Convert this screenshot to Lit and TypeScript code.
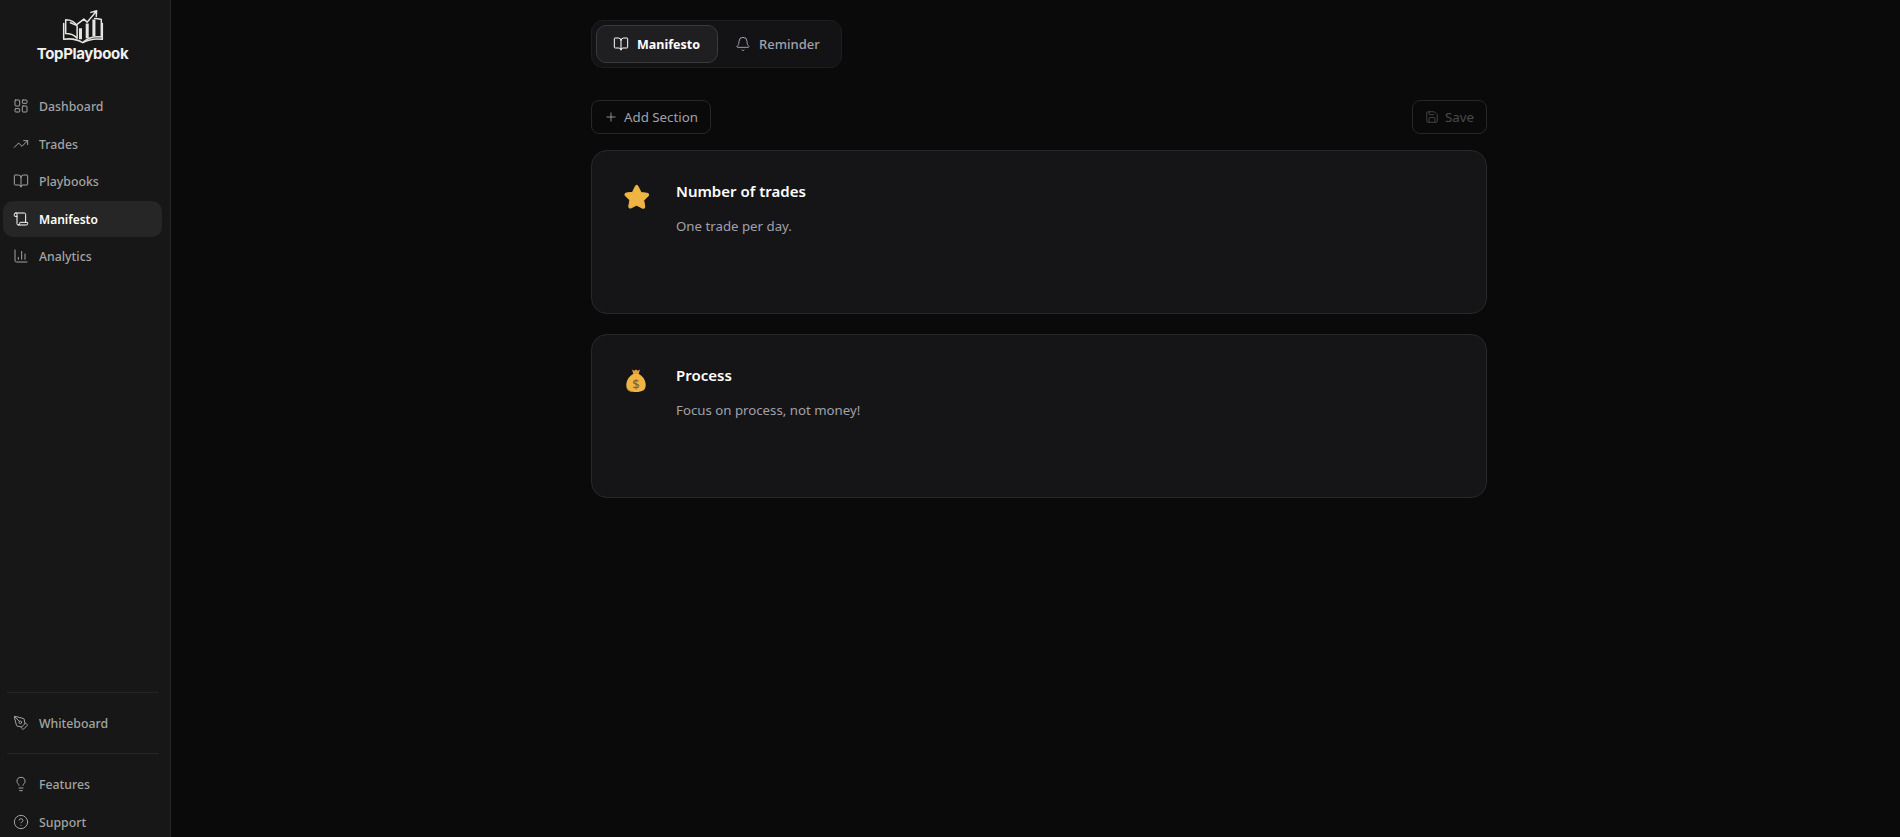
import { LitElement, html, css, svg } from "lit";
import { customElement } from "lit/decorators.js";

const ic = (body: unknown, size = 16) => html`<svg width=${size} height=${size} viewBox="0 0 24 24" fill="none" stroke="currentColor" stroke-width="1.5" stroke-linecap="round" stroke-linejoin="round">${body}</svg>`;

const icons = {
  dash: svg`<rect x="3" y="3" width="7" height="9" rx="1"/><rect x="14" y="3" width="7" height="5" rx="1"/><rect x="14" y="12" width="7" height="9" rx="1"/><rect x="3" y="16" width="7" height="5" rx="1"/>`,
  trend: svg`<path d="M16 7h6v6"/><path d="m22 7-8.5 8.5-5-5L2 17"/>`,
  book: svg`<path d="M12 7v14"/><path d="M3 18a1 1 0 0 1-1-1V4a1 1 0 0 1 1-1h5a4 4 0 0 1 4 4 4 4 0 0 1 4-4h5a1 1 0 0 1 1 1v13a1 1 0 0 1-1 1h-6a3 3 0 0 0-3 3 3 3 0 0 0-3-3z"/>`,
  scroll: svg`<path d="M19 17V5a2 2 0 0 0-2-2H4"/><path d="M8 21h12a2 2 0 0 0 2-2v-1a1 1 0 0 0-1-1H11a1 1 0 0 0-1 1v1a2 2 0 1 1-4 0V5a2 2 0 1 0-4 0v2a1 1 0 0 0 1 1h3"/>`,
  chart: svg`<path d="M3 3v16a2 2 0 0 0 2 2h16"/><path d="M8 17v-3"/><path d="M13 17V5"/><path d="M18 17V9"/>`,
  pen: svg`<path d="M15.7 21.3a1 1 0 0 1-1.4 0l-1.6-1.6a1 1 0 0 1 0-1.4l5.6-5.6a1 1 0 0 1 1.4 0l1.6 1.6a1 1 0 0 1 0 1.4z"/><path d="m18 13-1.4-6.9a1 1 0 0 0-.7-.8L3.2 2a1 1 0 0 0-1.2 1.2l3.3 12.7a1 1 0 0 0 .8.7L13 18"/><path d="m2.3 2.3 7.3 7.3"/><circle cx="11" cy="11" r="2"/>`,
  bulb: svg`<path d="M15 14c.2-1 .7-1.700 1.500-2.500 1-.9 1.500-2.200 1.500-3.500A6 6 0 0 0 6 8c0 1 .2 2.200 1.500 3.500.7.7 1.300 1.500 1.500 2.500"/><path d="M9 18h6"/><path d="M10 22h4"/>`,
  help: svg`<circle cx="12" cy="12" r="10"/><path d="M9.090 9a3 3 0 0 1 5.830 1c0 2-3 3-3 3"/><path d="M12 17h.01"/>`,
  bell: svg`<path d="M10.268 21a2 2 0 0 0 3.464 0"/><path d="M3.262 15.326A1 1 0 0 0 4 17h16a1 1 0 0 0 .74-1.673C19.410 13.956 18 12.499 18 8A6 6 0 0 0 6 8c0 4.499-1.411 5.956-2.738 7.326"/>`,
  plus: svg`<path d="M5 12h14"/><path d="M12 5v14"/>`,
  save: svg`<path d="M15.200 3a2 2 0 0 1 1.400.6l3.800 3.800a2 2 0 0 1 .6 1.400V19a2 2 0 0 1-2 2H5a2 2 0 0 1-2-2V5a2 2 0 0 1 2-2z"/><path d="M17 21v-7a1 1 0 0 0-1-1H8a1 1 0 0 0-1 1v7"/><path d="M7 3v4a1 1 0 0 0 1 1h7"/>`,
};

const star = html`<svg width="27" height="27" viewBox="0 0 26 26"><path d="M13 1.500c.8 0 1.300.5 1.700 1.300l2.600 5.300 5.800.8c1.500.2 2 1.600 1 2.600l-4.200 4.100 1 5.800c.2 1.500-1 2.400-2.300 1.700L13 20.200l-5.100 2.700c-1.300.7-2.500-.2-2.300-1.700l1-5.800-4.200-4.100c-1-1-.5-2.400 1-2.600l5.800-.8 2.600-5.300c.4-.8.900-1.300 1.700-1.300z" fill="#eeb545" stroke="#eeb545" stroke-width="1" stroke-linejoin="round"/></svg>`;

const bag = html`<svg width="26" height="26" viewBox="0 0 26 26"><path d="M9 1.500l2.200 1.200 1.800-1.200 1.800 1.200L17 1.500l-1.300 4.500h-5.400z" fill="#e2a042"/><path d="M10 6h6c3.800 2.200 6.700 6.400 6.700 11 0 5-3.300 7-9.700 7S3.300 22 3.300 17c0-4.600 2.900-8.800 6.700-11z" fill="#eeb545"/><path d="M3.500 19c1.500 3 4.500 3.500 6.700 5-3.800 0-6.300-1.500-6.700-5z" fill="#c98a35"/><text x="13" y="20.500" text-anchor="middle" font-size="13" font-weight="500" font-family="Noto Sans, sans-serif" fill="#8a6130">$</text></svg>`;

@customElement("app-root")
export class AppRoot extends LitElement {
  static styles = css`
    :host { display: flex; height: 837px; background: #0a0a0a; color: #fff; font-family: "Noto Sans", "Open Sans", sans-serif; overflow: hidden; }
    * { box-sizing: border-box; }
    .side { width: 171px; flex: none; background: #171717; border-right: 1px solid #262626; display: flex; flex-direction: column; height: 100%; overflow: hidden; }
    .logo { display: flex; flex-direction: column; align-items: center; height: 88.500px; padding-top: 9px; padding-right: 5px; flex: none; }
    .logo svg { display: block; }
    .logo span { font: 700 15px/18px Inter, sans-serif; letter-spacing: -0.35px; color: #f0f0f0; margin-top: 1px; }
    nav { display: flex; flex-direction: column; padding: 0 8px 0 3px; gap: 2px; flex: none; }
    .item { display: flex; align-items: center; height: 35.500px; flex: none; padding: 1px 0 0 10px; gap: 10px; color: #a3a3a3; font-size: 12.300px; font-weight: 500; border-radius: 10px; width: 159px; }
    .item svg { flex: none; width: 16px; height: 16px; margin-top: -1px; }
    .item.on { background: #262626; color: #fff; font-weight: 600; font-size: 12px; }
    .grow { flex: none; height: 418px; }
    .hr { height: 1px; flex: none; background: #262626; margin: 0 12px 0 7px; }
    .wb { padding-top: 12px; padding-bottom: 12px; }
    .foot { padding-top: 13px; }
    main { flex: 1; display: flex; justify-content: center; padding-left: 7px; }
    .wrap { width: 896px; flex: none; padding-top: 20px; display: flex; flex-direction: column; }
    .tabs { align-self: flex-start; display: flex; height: 48px; width: 251px; padding: 4px; background: #131315; border: 1px solid #1f1f21; border-radius: 12px; }
    .tab { display: flex; align-items: center; gap: 8px; padding: 0 16px; font-size: 13px; font-weight: 500; color: #a1a1aa; border-radius: 10px; height: 38px; border: 1px solid transparent; }
    .tab svg { width: 16px; height: 16px; flex: none; }
    .tab.on { width: 122px; background: #1f1e20; border-color: #3a3a3d; color: #fff; font-weight: 700; font-size: 12.500px; }
    .bar { display: flex; justify-content: space-between; margin-top: 32px; }
    .btn { display: flex; align-items: center; gap: 6px; height: 34px; padding: 0 12px; font-size: 13.300px; color: #a1a1aa; border: 1px solid #27272a; border-radius: 8px; }
    .btn svg { width: 14px; height: 14px; flex: none; }
    .btn.off { color: #4a4a4d; }
    .cards { display: flex; flex-direction: column; gap: 20px; margin-top: 16px; }
    .card { height: 164px; background: #151518; border: 1px solid #29292c; border-radius: 16px; padding: 28px 24px; display: flex; gap: 20px; }
    .emo { width: 40px; flex: none; display: flex; justify-content: center; padding-top: 5px; }
    .emo svg { display: block; }
    h3 { margin: 0; font-size: 15px; line-height: 24px; font-weight: 600; color: #fff; }
    p { margin: 12px 0 0; font-size: 13.250px; line-height: 22px; color: #a1a1aa; }
  `;

  render() {
    return html`
      <aside class="side">
        <div class="logo">
          <svg width="42" height="35" viewBox="125 25 125 104" fill="none" stroke="#e4e4e2" stroke-width="4.500" stroke-linejoin="round" stroke-linecap="round">
            <path d="M136 57c14 0 28 8 34 19v36c-9-10-21-14-34-14z"/>
            <path d="M130 68v47c20-3 40 0 57 10 18-10 38-13 58-10V68"/>
            <path d="M222 53c7 0 14 1 20 3v52c-18-2-37 0-52 14"/>
            <path d="M150 66l17 7 23-18 10 9 28-33M211 35l17-5-1 17"/>
            <path d="M180 82v33M200 68v44M220 56v50" stroke-width="9" stroke-linecap="butt"/>
          </svg>
          <span>TopPlaybook</span>
        </div>
        <nav>
          <div class="item">${ic(icons.dash)}Dashboard</div>
          <div class="item">${ic(icons.trend)}Trades</div>
          <div class="item">${ic(icons.book)}Playbooks</div>
          <div class="item on">${ic(icons.scroll)}Manifesto</div>
          <div class="item">${ic(icons.chart)}Analytics</div>
        </nav>
        <div class="grow"></div>
        <div class="hr"></div>
        <nav class="wb"><div class="item">${ic(icons.pen)}Whiteboard</div></nav>
        <div class="hr"></div>
        <nav class="foot">
          <div class="item">${ic(icons.bulb)}Features</div>
          <div class="item">${ic(icons.help)}Support</div>
        </nav>
      </aside>
      <main>
        <div class="wrap">
          <div class="tabs">
            <div class="tab on">${ic(icons.book)}Manifesto</div>
            <div class="tab">${ic(icons.bell)}Reminder</div>
          </div>
          <div class="bar">
            <div class="btn">${ic(icons.plus)}Add Section</div>
            <div class="btn off">${ic(icons.save)}Save</div>
          </div>
          <div class="cards">
            <div class="card">
              <div class="emo">${star}</div>
              <div><h3>Number of trades</h3><p>One trade per day.</p></div>
            </div>
            <div class="card">
              <div class="emo">${bag}</div>
              <div><h3>Process</h3><p>Focus on process, not money!</p></div>
            </div>
          </div>
        </div>
      </main>
    `;
  }
}
